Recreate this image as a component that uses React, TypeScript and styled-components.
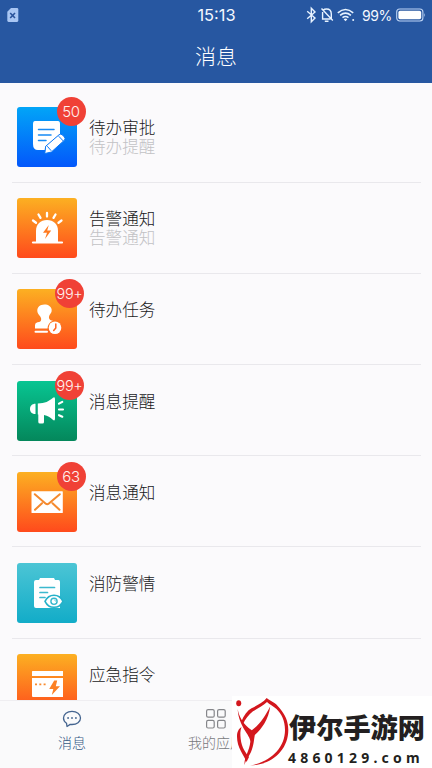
import React from "react";
import styled, { createGlobalStyle } from "styled-components";

const GlobalStyle = createGlobalStyle`
  * { box-sizing: border-box; }
  body {
    margin: 0;
    overflow: hidden;
    background: #fbfafc;
    font-family: "Noto Sans CJK SC", sans-serif;
  }
`;

const Screen = styled.div`
  position: relative;
  display: flex;
  flex-direction: column;
  width: 432px;
  height: 768px;
  overflow: hidden;
  background: #fbfafc;
`;

const Header = styled.header`
  flex: none;
  height: 82.5px;
  background: #2757a1;
  color: #f4f8ff;
`;

const StatusBar = styled.div`
  display: grid;
  grid-template-columns: 1fr auto 1fr;
  align-items: center;
  height: 30px;
  padding: 0 6px 0 7px;
  font-family: Inter, sans-serif;
  svg { display: block; }
`;

const Clock = styled.span`
  font-size: 16.4px;
  line-height: 30px;
`;

const StatusIcons = styled.div`
  display: flex;
  align-items: center;
  justify-content: flex-end;
`;

const Percent = styled.span`
  width: 30px;
  margin: 0 4px 0 5px;
  font-size: 14px;
  letter-spacing: -0.4px;
  white-space: nowrap;
`;

const Title = styled.h1`
  margin: 0;
  padding-top: 10px;
  text-align: center;
  color: #fff;
  font-size: 21px;
  font-weight: 300;
  line-height: 30px;
`;

const List = styled.main`
  flex: 1;
  min-height: 0;
  overflow: hidden;
  padding: 9px 11px 0 12px;
`;

const Row = styled.div`
  display: flex;
  height: 91.2px;
  padding: 15.6px 0 0 5px;
  border-bottom: 1px solid #e9e8ec;
`;

const Tile = styled.div<{ $from: string; $to: string }>`
  position: relative;
  flex: none;
  width: 60px;
  height: 60px;
  border-radius: 3px;
  background: linear-gradient(${(p) => p.$from}, ${(p) => p.$to});
  svg { display: block; }
`;

const Badge = styled.span<{ $wide: boolean }>`
  position: absolute;
  top: -10px;
  left: ${(p) => (p.$wide ? 38 : 39.5)}px;
  width: 29px;
  height: 29px;
  border-radius: 50%;
  background: #f04136;
  color: #fff2ef;
  text-align: center;
  font-family: Inter, sans-serif;
  font-weight: 300;
  font-size: ${(p) => (p.$wide ? 14.5 : 15)}px;
  line-height: 29px;
  letter-spacing: -0.3px;
`;

const Texts = styled.div`
  padding: 11px 0 0 12px;
  font-size: 16.6px;
  font-weight: 300;
  line-height: 19px;
`;

const Name = styled.div`
  color: #19191b;
`;

const Hint = styled.div`
  color: #c2c2c5;
`;

const TabBar = styled.nav`
  display: grid;
  grid-template-columns: repeat(3, 1fr);
  flex: none;
  height: 68.5px;
  border-top: 1px solid #efeef1;
  background: #fafafb;
`;

const Tab = styled.div<{ $active?: boolean }>`
  display: flex;
  flex-direction: column;
  align-items: center;
  padding-top: 8px;
  color: ${(p) => (p.$active ? "#365985" : "#77787c")};
  font-size: 14px;
  font-weight: 300;
  line-height: 20px;
  svg { display: block; margin-bottom: 3px; }
`;

const Brand = styled.aside`
  position: absolute;
  right: 0;
  bottom: 0;
  display: flex;
  width: 200px;
  height: 72px;
  background: #fff;
  svg { flex: none; }
`;

const BrandText = styled.div`
  padding-top: 13px;
  color: #231f20;
  white-space: nowrap;
`;

const BrandName = styled.div`
  font-size: 27.2px;
  font-weight: 900;
  line-height: 35px;
`;

const BrandUrl = styled.div`
  margin: 4px 0 0 -1px;
  font-family: "Noto Sans", sans-serif;
  font-size: 14px;
  font-weight: 700;
  line-height: 20px;
  letter-spacing: 4.2px;
`;

const Glyph = ({ children }: { children: React.ReactNode }) => (
  <svg width="60" height="60" viewBox="0 0 60 60" fill="#fff" strokeLinecap="round" strokeLinejoin="round">
    {children}
  </svg>
);

const NoteGlyph = () => (
  <Glyph>
    <path d="M18 14H41Q43 14 43 17V27L28 40V43H21Q16 43 16 37V17Q16 14 18 14Z" />
    <path d="M21.5 22.5H37M21.5 28H34M21.5 33.5H29" stroke="#168bf5" strokeWidth="1.5" />
    <path d="M29 39L42 27.8Q43.8 26.3 45.5 28L47.4 30Q49 31.8 47.2 33.4L34.4 45L28 46.5Z" stroke="#0a78f7" strokeWidth="1" />
    <path d="M42 29.5L46 33.7M30.5 39.5L34 43.5" stroke="#0a78f7" strokeWidth="1" />
  </Glyph>
);

const SirenGlyph = () => (
  <Glyph>
    <path d="M19 44V33C19 26 23.5 22 30 22S41 26 41 33V44Z" />
    <path d="M16 44.5H45" stroke="#fff" strokeWidth="2.2" />
    <path d="M16 22.5L19 24.7M21.5 16.5L23.5 19.8M30 15V18.5M38.5 16.5L36.5 19.8M44.5 22.5L41.5 24.7" stroke="#fff" strokeWidth="2.3" />
    <path d="M31.8 27L26 34.8H30L28 41L34.2 32.5H30.2Z" fill="#ff7b20" />
  </Glyph>
);

const StampGlyph = () => (
  <Glyph>
    <path d="M27.4 15.5C22.8 15.5 20.3 18.3 20.3 21.7C20.3 25.5 24.2 27 24.2 30C24.2 32.5 23 33 20.5 33.3Q18 33.8 18 36V39.5H30.5Q31 33.5 36 31.8C31.5 31.7 31 27.7 33.3 25Q35 23 34.7 20.8C34.2 17.5 31.4 15.5 27.4 15.5Z" />
    <path d="M18.5 42.8H30" stroke="#fff" strokeWidth="2" />
    <circle cx="38" cy="38.8" r="6.3" />
    <path d="M38.8 35V39L36.7 41.5" fill="none" stroke="#ff6420" strokeWidth="1.5" />
  </Glyph>
);

const HornGlyph = () => (
  <Glyph>
    <path d="M18.5 22.8V33C15 33 13 31 13 28S15 22.8 18.5 22.8Z" />
    <path d="M20.8 22.5C28 22.5 32 20.3 36 16.8Q38 15.5 38 18V37.5Q38 40.5 35.8 38.8C33 36 31 34.8 27 34V41Q27 42.5 25.5 42.5H23Q21.3 42.5 21.3 41V33.5H20.8Z" />
    <path d="M42 22.7L45.3 20.9M42 28.5H46M42 34.2L45.3 35.7" stroke="#fff" strokeWidth="2.1" />
  </Glyph>
);

const MailGlyph = () => (
  <Glyph>
    <rect x="14.5" y="19.2" width="31.3" height="21.8" rx="0.6" />
    <path d="M17.8 22.2L28.5 31.5Q30.2 33 31.9 31.5L42.8 22.2M18 37.8L25 31.2M42.5 37.8L35.5 31.2" fill="none" stroke="#f58a2e" strokeWidth="2" />
  </Glyph>
);

const ReportGlyph = () => (
  <Glyph>
    <path d="M19 17H22L23 15H37L38 17H41.5Q43 17 43 19V45H19Q17 45 17 43V19Q17 17 19 17Z" />
    <path d="M23 24.5H37.5M23 29.5H30.5M23 34.5H28" stroke="#3bb9ce" strokeWidth="1.7" />
    <path d="M28 38.3C32 30.3 42 30.3 46 38.3C42 46.3 32 46.3 28 38.3Z" stroke="#24b1c9" strokeWidth="1.6" />
    <circle cx="37" cy="38.3" r="3.1" stroke="#35b8cd" strokeWidth="1.4" />
    <path d="M37.7 37L38.6 38.3" stroke="#35b8cd" strokeWidth="0.8" />
  </Glyph>
);

const CommandGlyph = () => (
  <Glyph>
    <path d="M15.5 17H46V22H15V17.5ZM15 24H46V43H16Q15 43 15 42Z" />
    <path d="M18 30.3H20M22.3 30.3H24.3M26.6 30.3H28.6" stroke="#f98b2e" strokeWidth="1.8" strokeLinecap="butt" />
    <path d="M37.2 26.5L32.2 35H36.3L34.8 41L43 32.3H38.8L40.2 26.5Z" fill="#fc8125" />
  </Glyph>
);

const orange = { from: "#fcb022", to: "#ff4a1c" };

const messages = [
  { name: "待办审批", hint: "待办提醒", badge: "50", from: "#02a5f7", to: "#0357fb", Icon: NoteGlyph },
  { name: "告警通知", hint: "告警通知", ...orange, Icon: SirenGlyph },
  { name: "待办任务", badge: "99+", ...orange, Icon: StampGlyph },
  { name: "消息提醒", badge: "99+", from: "#08c592", to: "#04875b", Icon: HornGlyph },
  { name: "消息通知", badge: "63", ...orange, Icon: MailGlyph },
  { name: "消防警情", from: "#4cc5d5", to: "#12acc8", Icon: ReportGlyph },
  { name: "应急指令", ...orange, Icon: CommandGlyph },
];

const SimIcon = () => (
  <svg width="12" height="16" viewBox="0 0 12 16">
    <path d="M4 1H10Q11.3 1 11.3 2.4V13.6Q11.3 15 10 15H1.6Q.3 15 .3 13.6V4.7Z" fill="#a9c6f3" />
    <path d="M3.2 6L8 11M8 6L3.2 11" stroke="#2b549b" strokeWidth="1.6" />
  </svg>
);

const StatusGlyphs = () => (
  <svg width="51" height="18" viewBox="0 0 51 18" fill="none" stroke="#e8f3ff" strokeWidth="1.4">
    <path d="M1.2 5.2L9 12L5.3 15.8V2.2L9 6L1.2 12.8" />
    <path d="M17.5 4Q18.3 3 20.5 3Q25.3 3 25.3 8V12.5M16.6 6V13H24.5M15.5 2.5L26.8 14.5M18.8 15.2H22.5" />
    <path d="M31.8 6.8Q39.5 .2 47.2 6.8M34.1 9.3Q39.5 4.8 44.9 9.3M36.5 11.6Q39.5 9.3 42.5 11.6" strokeWidth="1.6" />
    <path d="M37.6 13.2Q39.5 11.8 41.4 13.2L39.5 15.3Z" fill="#e8f3ff" stroke="none" />
    <circle cx="47.2" cy="14" r="1" fill="#e8f3ff" stroke="none" />
  </svg>
);

const Battery = () => (
  <svg width="30" height="14" viewBox="0 0 30 14">
    <rect x=".7" y="1" width="26.2" height="12" rx="3" fill="none" stroke="#bdd4f5" strokeWidth="1.1" />
    <rect x="2.4" y="2.7" width="22.8" height="8.6" rx="1.7" fill="#fff" />
    <path d="M28 5Q29.5 7 28 9.2Z" fill="#bdd4f5" />
  </svg>
);

const ChatIcon = () => (
  <svg width="20" height="20" viewBox="0 0 20 20" fill="none" stroke="#44648f" strokeWidth="1.3" strokeLinejoin="round">
    <path d="M4.5 14.2C2.5 12.8 1.5 11 1.5 9C1.5 5 5.2 2.3 10 2.3S18.5 5 18.5 9S14.8 15.5 10 15.5Q9 15.5 8.2 15.4L5 17.5Z" />
    <path d="M5.2 9H7M9.1 9H10.9M13 9H14.8" strokeWidth="1.7" />
  </svg>
);

const AppsIcon = () => (
  <svg width="20" height="20" viewBox="0 0 20 20" fill="none" stroke="#85868a" strokeWidth="1.2">
    <rect x=".6" y=".6" width="7.6" height="7.6" rx="1.5" />
    <rect x="11.6" y=".6" width="7.6" height="7.6" rx="1.5" />
    <rect x=".6" y="11.4" width="7.6" height="7.6" rx="1.5" />
    <rect x="11.6" y="11.4" width="7.6" height="7.6" rx="1.5" />
  </svg>
);

const BrandMark = () => (
  <svg width="57" height="72" viewBox="0 0 57 72" fill="#d3171d">
    <ellipse cx="6.7" cy="7.3" rx="2.5" ry="3" />
    <path d="M9.3 25.5C12 19 15.5 14.5 19.5 12.3C25 9.3 31 6.5 34.7 2C39 5.5 43.5 6.5 47.5 12C53 18.5 56.3 25 56.3 34C56.3 54 40 69 18 69.5C37 66.5 53 53 53 34C53 24.5 49.5 18 44.5 13C41 9.8 37.5 8.5 35 6C31 10 25 12.5 21 15.3C16.5 18.5 13.5 23 11 28Z" />
    <path d="M5.7 13C7 21 11 28 19.8 34.3C28.5 28 33 20 38.2 10.5C36.5 23.5 30 32.5 22.8 39C21.8 44 22 49 19 56C17 60.5 13.5 64 12.5 69C12 61 17.5 55 18.3 46C19 39.5 6.5 31 5.7 13Z" />
    <path d="M5 40.5C5 35.5 7 32.5 9.5 31C8 35 8.3 38.5 8.7 43C9.5 51.5 14 57 17 61L14.5 66C11.5 58 5 52 5 40.5Z" />
  </svg>
);

export default function App() {
  return (
    <>
      <GlobalStyle />
      <Screen>
        <Header>
          <StatusBar>
            <SimIcon />
            <Clock>15:13</Clock>
            <StatusIcons>
              <StatusGlyphs />
              <Percent>99%</Percent>
              <Battery />
            </StatusIcons>
          </StatusBar>
          <Title>消息</Title>
        </Header>
        <List>
          {messages.map(({ name, hint, badge, from, to, Icon }) => (
            <Row key={name}>
              <Tile $from={from} $to={to}>
                <Icon />
                {badge && <Badge $wide={badge.length > 2}>{badge}</Badge>}
              </Tile>
              <Texts>
                <Name>{name}</Name>
                {hint && <Hint>{hint}</Hint>}
              </Texts>
            </Row>
          ))}
        </List>
        <TabBar>
          <Tab $active>
            <ChatIcon />
            消息
          </Tab>
          <Tab>
            <AppsIcon />
            我的应用
          </Tab>
        </TabBar>
        <Brand>
          <BrandMark />
          <BrandText>
            <BrandName>伊尔手游网</BrandName>
            <BrandUrl>4860129.com</BrandUrl>
          </BrandText>
        </Brand>
      </Screen>
    </>
  );
}
